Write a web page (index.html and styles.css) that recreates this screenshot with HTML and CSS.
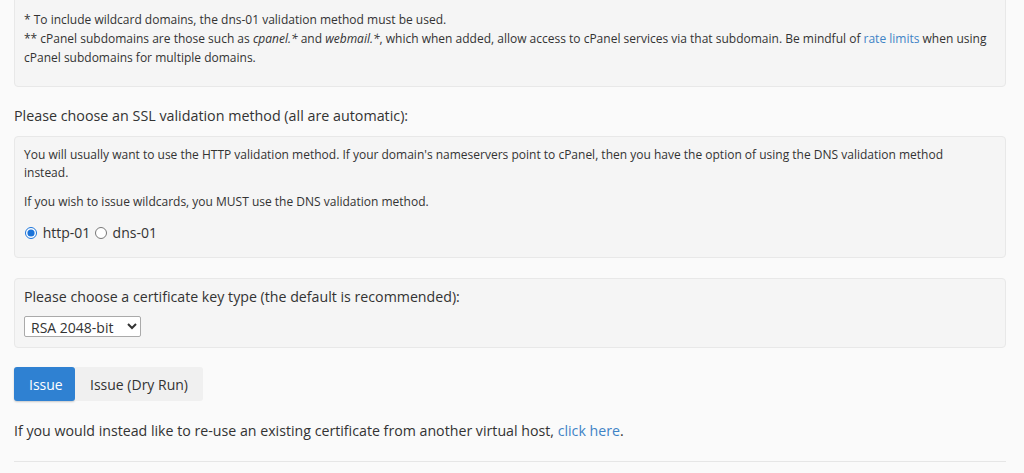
FILE: index.html
```html
<!DOCTYPE html>
<html lang="en">
<head>
    <meta charset="UTF-8">
    <meta name="viewport" content="width=device-width, initial-scale=1.0">
    <title>SSL/TLS Certificates - Issue</title>
    <link rel="stylesheet" href="styles.css">
</head>
<body>
    <div class="page">
        <div class="well well-notes">
            <p>* To include wildcard domains, the dns-01 validation method must be used.</p>
            <p>** cPanel subdomains are those such as <em>cpanel.*</em> and <em>webmail.*</em>, which when added, allow access to cPanel services via that subdomain. Be mindful of <a href="#">rate limits</a> when using cPanel subdomains for multiple domains.</p>
        </div>

        <h4 class="section-title">Please choose an SSL validation method (all are automatic):</h4>
        <div class="well well-method">
            <p>You will usually want to use the HTTP validation method. If your domain's nameservers point to cPanel, then you have the option of using the DNS validation method instead.</p>
            <p>If you wish to issue wildcards, you MUST use the DNS validation method.</p>
            <div class="radio-row">
                <label><input type="radio" name="method" value="http-01" checked> http-01</label>
                <label><input type="radio" name="method" value="dns-01"> dns-01</label>
            </div>
        </div>

        <div class="well well-key">
            <label class="key-label" for="key_type">Please choose a certificate key type (the default is recommended):</label>
            <select id="key_type" class="key-select">
                <option>RSA 2048-bit</option>
                <option>RSA 4096-bit</option>
                <option>ECDSA P-256</option>
            </select>
        </div>

        <div class="actions">
            <button class="btn btn-primary">Issue</button>
            <button class="btn btn-default">Issue (Dry Run)</button>
        </div>

        <p class="reuse">If you would instead like to re-use an existing certificate from another virtual host, <a href="#">click here</a>.</p>
        <hr class="divider">
    </div>
</body>
</html>
```

FILE: styles.css
```css
body {
    font-family: "Open Sans", sans-serif;
    background: #fafafa;
    color: #333;
    margin: 0;
    padding: 0;
}
a {
    color: #3f83c6;
    text-decoration: none;
}
p {
    margin: 0;
}
.page {
    padding: 0 18px 0 14px;
}
.well {
    background: #f5f5f5;
    border: 1px solid #e8e8e8;
    border-radius: 4px;
    padding: 0 9px;
}
.well-notes {
    margin-top: -10px;
    border-top-left-radius: 0;
    border-top-right-radius: 0;
    padding-top: 19px;
    padding-bottom: 19px;
    padding-right: 14px;
    font-size: 12px;
    line-height: 19px;
}
.section-title {
    font-size: 14.3px;
    font-weight: normal;
    margin: 19px 0 10px 0;
    line-height: 20px;
}
.well-method {
    font-size: 12px;
    line-height: 18px;
    padding-top: 9px;
    padding-right: 16px;
    padding-bottom: 13px;
}
.well-method p {
    margin-bottom: 11px;
}
.radio-row {
    font-size: 14px;
    line-height: 22px;
}
.radio-row input {
    margin: 0 2px 0 1px;
    width: 12px;
    height: 12px;
    vertical-align: -1px;
    accent-color: #1a73d9;
}
.well-key {
    margin-top: 20px;
    padding-top: 8px;
    padding-bottom: 9px;
}
.key-label {
    display: block;
    font-size: 14.2px;
    line-height: 20px;
    margin-bottom: 9px;
}
.key-select {
    font-family: "Open Sans", sans-serif;
    font-size: 14px;
    color: #333;
    height: 21px;
    width: 117px;
    padding: 0 2px;
    background: #fff;
    border: 1px solid #aaa;
    border-radius: 2px;
}
.actions {
    display: flex;
    margin-top: 19px;
}
.btn {
    font-family: "Open Sans", sans-serif;
    font-size: 14px;
    height: 34px;
    padding: 0 15px;
    border: none;
    border-radius: 3px;
    cursor: pointer;
}
.btn-primary {
    background: #2f81d2;
    color: #fff;
    width: 61px;
    box-shadow: 0 1px 2px rgba(0, 0, 0, 0.2);
}
.btn-default {
    background: #f0f0f0;
    color: #333;
    width: 128px;
    border-radius: 0 3px 3px 0;
}
.reuse {
    font-size: 14.2px;
    line-height: 20px;
    margin-top: 20px;
}
.divider {
    border: none;
    border-top: 1px solid #e6e6e6;
    margin: 20px 0 0 0;
}
```
